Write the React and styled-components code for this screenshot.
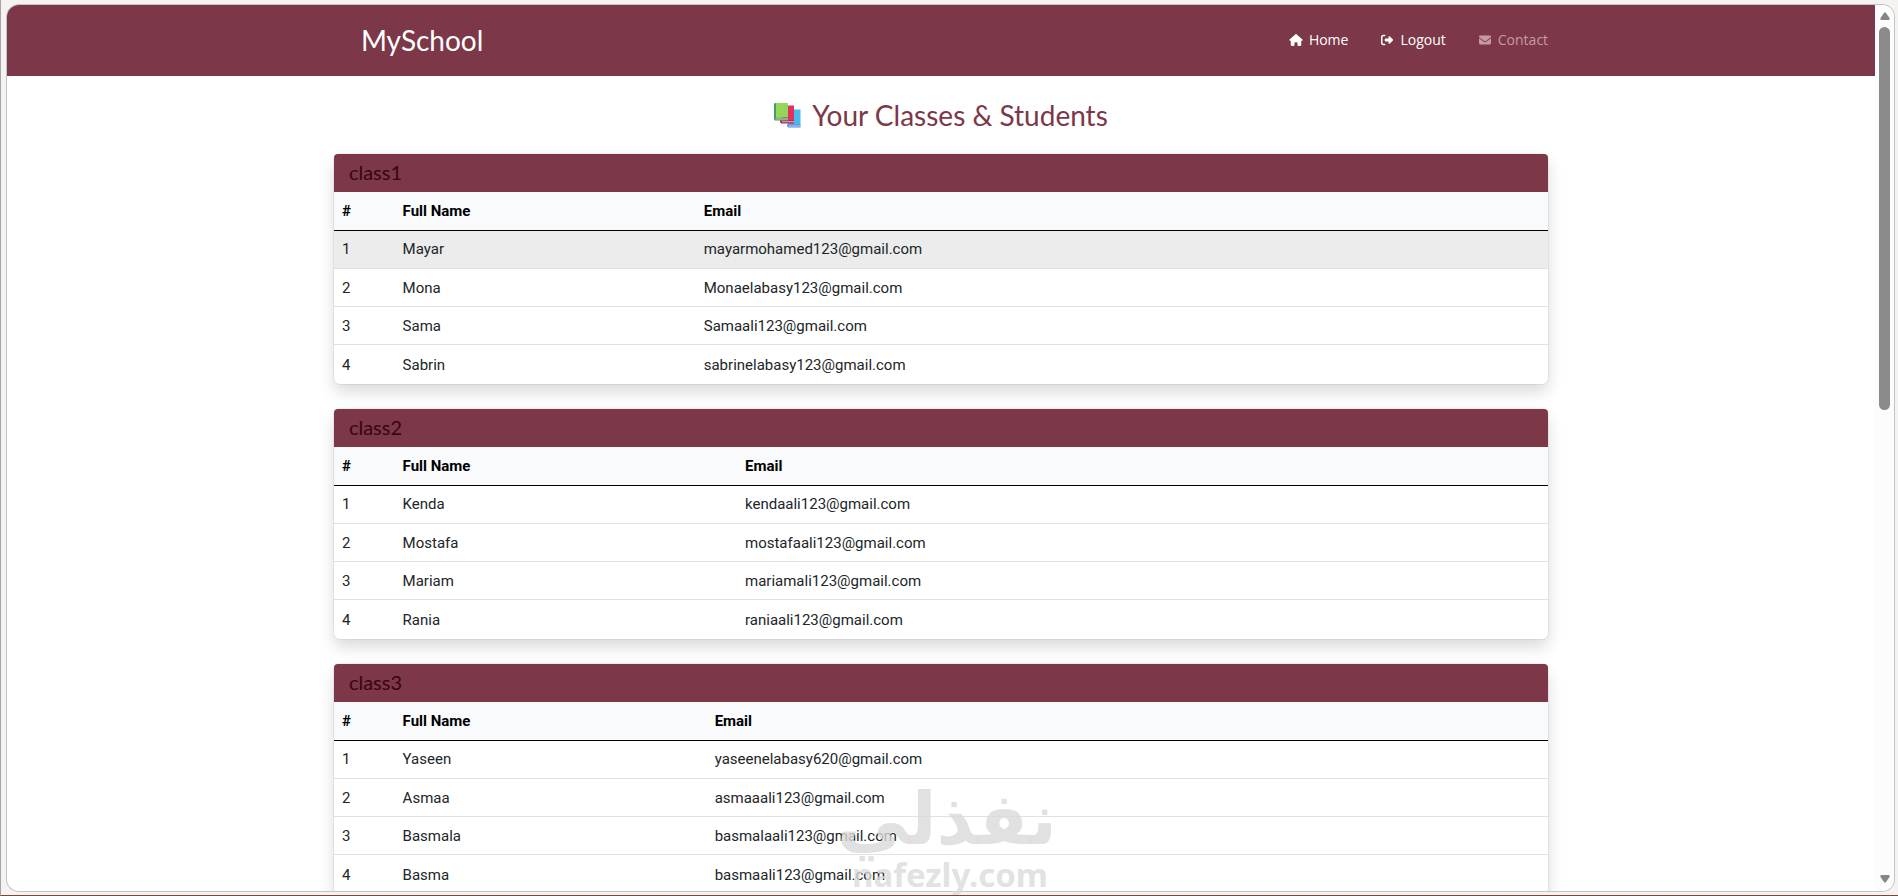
import React from 'react';
import styled, { createGlobalStyle } from 'styled-components';
import { FaHouse, FaRightFromBracket, FaEnvelope } from 'react-icons/fa6';

const GlobalStyle = createGlobalStyle`
    * {
        box-sizing: border-box;
    }
    body {
        margin: 0;
        background-color: #f5f3f2;
        font-family: Roboto, "Liberation Sans", sans-serif;
        font-size: 15px;
        line-height: 23px;
        color: #212529;
    }
`;

const Desktop = styled.div`
    height: 100vh;
    padding: 5px 4px 4px 6px;
    border-left: 1px solid #a5a3a3;
    border-bottom: 1px solid #7a4a30;
    position: relative;
    overflow: hidden;
`;

const Browser = styled.div`
    height: 100%;
    display: flex;
    background-color: #ffffff;
    border-radius: 12px;
    box-shadow: 0 0 0 1px #c4c4c6;
    overflow: hidden;
`;

const Page = styled.div`
    flex: 1;
    min-width: 0;
    overflow: hidden;
`;

const Scrollbar = styled.div`
    width: 19px;
    padding: 7px 0 8px;
    display: flex;
    flex-direction: column;
    align-items: center;
    background-color: #fcfcfc;
`;

const Arrow = styled.svg`
    width: 10px;
    height: 8px;
    fill: #858585;
`;

const Track = styled.div`
    flex: 1;
    padding: 7px 0;
`;

const Thumb = styled.div`
    width: 11px;
    height: 45.5%;
    border-radius: 6px;
    background-color: #8b8b8b;
`;

const Container = styled.div`
    width: 65%;
    margin: 0 auto;
`;

const Navbar = styled.header`
    background-color: #7c3748;
`;

const NavInner = styled(Container)`
    height: 71px;
    padding-left: 27px;
    padding-bottom: 2px;
    display: flex;
    align-items: center;
    justify-content: space-between;
`;

const Brand = styled.a`
    font-family: Lato, sans-serif;
    font-size: 28px;
    line-height: 36px;
    color: #ffffff;
    text-decoration: none;
`;

const Nav = styled.nav`
    display: flex;
    gap: 32px;
`;

const NavLink = styled.a`
    display: flex;
    align-items: center;
    gap: 6px;
    font-family: "Open Sans", sans-serif;
    font-size: 14px;
    font-weight: 500;
    line-height: 24px;
    color: ${props => props.$muted ? '#c69aa5' : '#ffffff'};
    text-decoration: none;

    svg {
        width: 14px;
        height: 12px;
    }
`;

const Title = styled.h1`
    margin: 21px 0;
    display: flex;
    align-items: center;
    justify-content: center;
    gap: 11px;
    font-family: Lato, sans-serif;
    font-size: 28px;
    font-weight: 400;
    line-height: 36px;
    color: #7c3748;
`;

const BooksIcon = styled.svg`
    width: 27px;
    height: 25px;
`;

const Card = styled.section`
    margin-bottom: 25px;
    border-radius: 6px;
    background-color: #ffffff;
    box-shadow: 0 0 0 1px rgba(0, 0, 0, 0.05), 0 8px 16px rgba(0, 0, 0, 0.15);
`;

const CardHeader = styled.h2`
    height: 38px;
    margin: 0;
    padding: 6px 15px;
    border-radius: 4px 4px 0 0;
    background-color: #7c3748;
    font-family: Lato, sans-serif;
    font-size: 20px;
    font-weight: 400;
    line-height: 24px;
    color: #3b0312;
`;

const Table = styled.table`
    width: 100%;
    table-layout: fixed;
    border-collapse: separate;
    border-spacing: 0;
    text-align: left;
`;

const Th = styled.th`
    width: ${props => props.$width || 'auto'};
    padding: 8px 8px 7px;
    border-bottom: 1px solid #000000;
    background-color: #f8fafb;
    color: #000000;
    font-weight: 700;
`;

const Td = styled.td`
    padding: 7px 8px;
    border-bottom: 1px solid #dee2e6;
`;

const Row = styled.tr`
    background-color: ${props => props.$active ? '#ececec' : 'transparent'};

    &:nth-child(n + 2) td {
        padding: 8px 8px 6px;
    }

    &:last-child td {
        padding: 9px 8px 6px;
        border-bottom-color: transparent;
    }
`;

const Watermark = styled.div`
    position: absolute;
    left: 842px;
    bottom: 2px;
    width: 214px;
    text-align: center;
    white-space: nowrap;
    color: rgba(218, 218, 218, 0.8);
    pointer-events: none;
`;

const WatermarkArabic = styled.div`
    font-family: "DejaVu Sans", sans-serif;
    font-size: 72px;
    font-weight: 700;
    line-height: 76px;
`;

const WatermarkLatin = styled.div`
    font-family: "Noto Sans", sans-serif;
    font-size: 33px;
    font-weight: 700;
    line-height: 36px;
`;

const classes = [
    {
        name: 'class1',
        nameWidth: '24.8%',
        students: [
            { name: 'Mayar', email: 'mayarmohamed123@gmail.com', active: true },
            { name: 'Mona', email: 'Monaelabasy123@gmail.com' },
            { name: 'Sama', email: 'Samaali123@gmail.com' },
            { name: 'Sabrin', email: 'sabrinelabasy123@gmail.com' },
        ],
    },
    {
        name: 'class2',
        nameWidth: '28.2%',
        students: [
            { name: 'Kenda', email: 'kendaali123@gmail.com' },
            { name: 'Mostafa', email: 'mostafaali123@gmail.com' },
            { name: 'Mariam', email: 'mariamali123@gmail.com' },
            { name: 'Rania', email: 'raniaali123@gmail.com' },
        ],
    },
    {
        name: 'class3',
        nameWidth: '25.7%',
        students: [
            { name: 'Yaseen', email: 'yaseenelabasy620@gmail.com' },
            { name: 'Asmaa', email: 'asmaaali123@gmail.com' },
            { name: 'Basmala', email: 'basmalaali123@gmail.com' },
            { name: 'Basma', email: 'basmaali123@gmail.com' },
        ],
    },
];

const Books = () => (
    <BooksIcon viewBox="0 0 27 25" aria-hidden="true">
        <path d="M14 6.500h12.500v15.500H14z" fill="#4bb9ef" />
        <path d="M13 21.500h13.500V24.500H14.500a2 2 0 0 1-1.500-2z" fill="#5a86d8" />
        <path d="M14.500 22.500h12v1h-12z" fill="#c3d8f5" />
        <path d="M8 2.500h12v15H8z" fill="#e0315f" />
        <path d="M6 17.200h14V20.500H7.500a2 2 0 0 1-1.500-2z" fill="#a82552" />
        <path d="M8 18.300h12v1H8z" fill="#e8b6c8" />
        <path d="M1 0h13v14.500H1z" fill="#93d65a" />
        <path d="M0 .5L2 0v15.500L0 16.500z" fill="#4a9a68" />
        <path d="M0 14.500h14v3H1.500A1.500 1.500 0 0 1 0 16z" fill="#5a8f62" />
        <path d="M1.500 15.500H14v1H1.500z" fill="#b9d6b4" />
    </BooksIcon>
);

const ClassCard = ({ name, nameWidth, students }) => {
    return <Card>
        <CardHeader>{name}</CardHeader>
        <Table>
            <thead>
                <tr>
                    <Th $width="5%">#</Th>
                    <Th $width={nameWidth}>Full Name</Th>
                    <Th>Email</Th>
                </tr>
            </thead>
            <tbody>
                {students.map((student, i) => (
                    <Row key={student.email} $active={student.active}>
                        <Td>{i + 1}</Td>
                        <Td>{student.name}</Td>
                        <Td>{student.email}</Td>
                    </Row>
                ))}
            </tbody>
        </Table>
    </Card>
}

const App = () => {
    return <Desktop>
        <GlobalStyle />
        <Browser>
            <Page>
                <Navbar>
                    <NavInner>
                        <Brand href="#">MySchool</Brand>
                        <Nav>
                            <NavLink href="#"><FaHouse />Home</NavLink>
                            <NavLink href="#"><FaRightFromBracket />Logout</NavLink>
                            <NavLink href="#" $muted><FaEnvelope />Contact</NavLink>
                        </Nav>
                    </NavInner>
                </Navbar>
                <Container as="main">
                    <Title><Books />Your Classes &amp; Students</Title>
                    {classes.map(item => <ClassCard key={item.name} {...item} />)}
                </Container>
            </Page>
            <Scrollbar>
                <Arrow viewBox="0 0 10 8"><path d="M4 1Q5-.5 6 1L9.500 6Q10 8 8.500 8h-7Q0 8 .5 6z" /></Arrow>
                <Track><Thumb /></Track>
                <Arrow viewBox="0 0 10 8"><path d="M4 7Q5 8.500 6 7L9.500 2Q10 0 8.500 0h-7Q0 0 .5 2z" /></Arrow>
            </Scrollbar>
        </Browser>
        <Watermark>
            <WatermarkArabic lang="ar" dir="rtl">نفذلي</WatermarkArabic>
            <WatermarkLatin>nafezly.com</WatermarkLatin>
        </Watermark>
    </Desktop>
}

export default App;
